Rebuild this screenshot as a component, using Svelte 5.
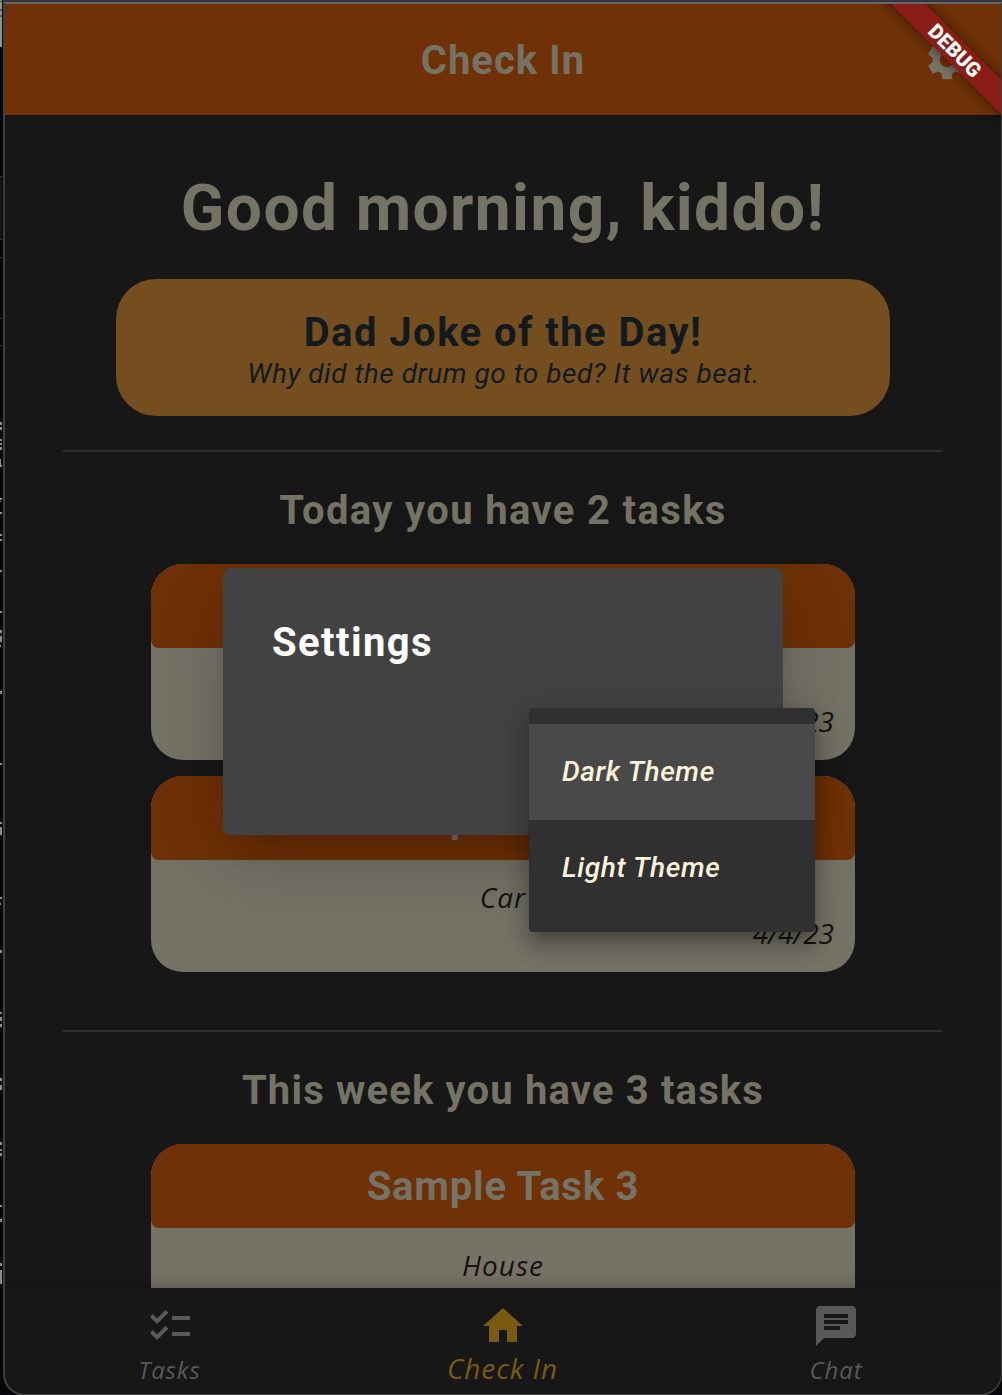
<script>
  const today = [
    { id: 1, title: '', category: '', due: '4/4/23' },
    { id: 2, title: 'Sample Task 2', category: 'Car', due: '4/4/23' }
  ];
  const week = [{ id: 3, title: 'Sample Task 3', category: 'House', due: null }];

  // [y, height, width] of the marks peeking out from the window behind
  const slivers = [
    [422, 3, 2], [427, 3, 2], [439, 2, 2], [443, 2, 2], [447, 3, 2], [459, 7, 1], [465, 2, 2],
    [498, 2, 2], [501, 1, 1], [512, 2, 2], [534, 2, 2], [539, 2, 2], [570, 2, 2], [611, 2, 2],
    [630, 3, 2], [636, 6, 2], [645, 2, 1], [691, 3, 2], [763, 2, 2], [822, 2, 2], [827, 8, 2],
    [897, 2, 2], [903, 2, 1], [950, 3, 2], [1012, 2, 2], [1017, 4, 2], [1024, 3, 2],
    [1078, 3, 2], [1085, 5, 2], [1142, 3, 2], [1149, 2, 2], [1153, 3, 2], [1205, 2, 2],
    [1219, 3, 2], [1263, 3, 2], [1270, 14, 2]
  ];
</script>

{#snippet taskCard(task)}
  <article class="task">
    <h3 class="display">{task.title}</h3>
    <p class="category">{task.category}</p>
    {#if task.due}
      <p class="due">{task.due}</p>
    {/if}
  </article>
{/snippet}

<div class="desktop">
  <svg class="behind" width="3" height="1395" viewBox="0 0 3 1395" aria-hidden="true">
    <rect width="2" height="47" fill="#929292" />
    <rect y="1" width="2" height="1" fill="#444" />
    <rect y="9" width="2" height="2" fill="#555" />
    <rect y="15" width="2" height="2" fill="#555" />
    <rect y="177" width="2" height="62" fill="#15191c" />
    <rect y="176" width="2" height="1" fill="#303438" />
    <rect y="239" width="2" height="1" fill="#303438" />
    <rect y="257" width="2" height="1" fill="#303438" />
    <rect y="318" width="2" height="1" fill="#303438" />
    <rect y="345" width="2" height="1" fill="#303438" />
    {#each slivers as [y, h, w]}
      <rect {y} width={w} height={h} fill="#8b8e91" />
    {/each}
  </svg>

  <div class="window">
    <header class="appbar">
      <h1 class="display">Check In</h1>
      <svg class="gear" viewBox="0 0 24 24" aria-label="Settings">
        <path d="M19.14 12.94c.04-.3.06-.61.06-.94 0-.32-.02-.64-.07-.94l2.03-1.58c.18-.14.23-.41.12-.61l-1.92-3.32c-.12-.22-.37-.29-.59-.22l-2.39.96c-.5-.38-1.03-.7-1.62-.94l-.36-2.54c-.04-.24-.24-.41-.48-.41h-3.84c-.24 0-.43.17-.47.41l-.36 2.54c-.59.24-1.13.57-1.62.94l-2.39-.96c-.22-.08-.47 0-.59.22L2.74 8.87c-.12.21-.08.47.12.61l2.03 1.58c-.05.3-.09.63-.09.94s.02.64.07.94l-2.03 1.58c-.18.14-.23.41-.12.61l1.92 3.32c.12.22.37.29.59.22l2.39-.96c.5.38 1.03.7 1.62.94l.36 2.54c.05.24.24.41.48.41h3.84c.24 0 .44-.17.47-.41l.36-2.54c.59-.24 1.13-.56 1.62-.94l2.39.96c.22.08.47 0 .59-.22l1.92-3.32c.12-.22.07-.47-.12-.61l-2.01-1.58zM12 15.6c-1.98 0-3.6-1.62-3.6-3.6s1.62-3.6 3.6-3.6 3.6 1.62 3.6 3.6-1.62 3.6-3.6 3.6z" />
      </svg>
    </header>

    <main>
      <h2 class="display greeting">Good morning, kiddo!</h2>
      <section class="joke">
        <h3 class="display">Dad Joke of the Day!</h3>
        <p>Why did the drum go to bed? It was beat.</p>
      </section>
      <hr />
      <h2 class="display count today">Today you have 2 tasks</h2>
      <div class="list">
        {#each today as task (task.id)}
          {@render taskCard(task)}
        {/each}
      </div>
      <hr class="second" />
      <h2 class="display count week">This week you have 3 tasks</h2>
      <div class="list">
        {#each week as task (task.id)}
          {@render taskCard(task)}
        {/each}
      </div>
    </main>

    <nav>
      <div class="tab">
        <svg viewBox="0 0 24 24"><path d="M22 7h-9v2h9V7zm0 8h-9v2h9v-2zM5.54 11L2 7.46l1.41-1.41 2.12 2.12 4.24-4.24 1.41 1.41L5.54 11zm0 8L2 15.46l1.41-1.41 2.12 2.12 4.24-4.24 1.41 1.41L5.54 19z" /></svg>
        <span>Tasks</span>
      </div>
      <div class="tab active">
        <svg viewBox="0 0 24 24"><path d="M10 20v-6h4v6h5v-8h3L12 3 2 12h3v8z" /></svg>
        <span>Check In</span>
      </div>
      <div class="tab">
        <svg viewBox="0 0 24 24"><path d="M20 2H4c-1.1 0-1.99.9-1.99 2L2 22l4-4h14c1.1 0 2-.9 2-2V4c0-1.1-.9-2-2-2zM6 9h12v2H6V9zm8 5H6v-2h8v2zm4-6H6V6h12v2z" /></svg>
        <span>Chat</span>
      </div>
    </nav>
  </div>

  <div class="dialog" role="dialog" aria-label="Settings">
    <h2 class="display">Settings</h2>
  </div>
  <div class="menu" role="menu">
    <div class="item selected" role="menuitem">Dark Theme</div>
    <div class="item" role="menuitem">Light Theme</div>
  </div>

  <svg class="banner" width="129" height="130" viewBox="0 0 129 130" aria-hidden="true">
    <polygon class="ribbon" points="-2,-21 32.5,-21 170,116.5 170,151" />
    <text transform="translate(83 46.5) rotate(45)" text-anchor="middle" y="7.3">DEBUG</text>
  </svg>
  <div class="frame"></div>
</div>

<style>
  :global(body) {
    background: #05070a;
  }
  .desktop {
    position: relative;
    width: 1002px;
    height: 1395px;
    overflow: hidden;
    background: #06070b;
    font-family: Roboto, sans-serif;
    padding: 4px 1px 0 5px;
    box-sizing: border-box;
  }
  .behind {
    position: absolute;
    left: 0;
    top: 0;
  }
  .window {
    isolation: isolate;
    display: flex;
    flex-direction: column;
    height: 1391px;
    background: #171717;
    border-radius: 0 0 20px 20px;
    overflow: hidden;
  }
  .frame {
    position: absolute;
    inset: 0 0 -1px 3px;
    border: 2px solid rgba(120, 120, 120, 0.5);
    border-right-width: 1px;
    border-top: 2px solid #666669;
    border-radius: 0 0 22px 22px;
    margin-top: 2px;
    box-shadow: 0 -3px 0 #35363b;
  }
  h1, h2, h3, p, hr {
    margin: 0;
  }
  .display {
    font-family: Roboto, sans-serif;
    font-weight: 700;
    font-size: 40px;
    line-height: 48px;
    color: #757266;
    white-space: nowrap;
  }
  .appbar {
    flex: none;
    display: grid;
    grid-template-columns: 1fr auto 1fr;
    align-items: center;
    height: 111px;
    background: #6f3105;
    box-shadow: 0 2px 6px rgba(0, 0, 0, 0.2);
    z-index: 1;
  }
  .appbar h1 {
    grid-column: 2;
    padding-top: 2px;
    letter-spacing: 1px;
  }
  .gear {
    justify-self: end;
    width: 48px;
    height: 48px;
    margin-right: 30px;
    fill: #757266;
  }
  main {
    flex: 1;
    min-height: 0;
    overflow: hidden;
    padding: 56px 58px 0;
  }
  .greeting {
    font-size: 64px;
    line-height: 76px;
    text-align: center;
    letter-spacing: 1.4px;
  }
  .joke {
    height: 137px;
    margin: 32px 53px 34px;
    padding-top: 30px;
    box-sizing: border-box;
    border-radius: 40px;
    background: #754e1f;
    text-align: center;
  }
  .joke .display {
    color: #131a1e;
    letter-spacing: 1.45px;
  }
  .joke p {
    font-size: 28px;
    line-height: 34px;
    font-style: italic;
    letter-spacing: 0.53px;
    color: #131a1e;
    padding-left: 1px;
  }
  hr {
    border: 0;
    height: 2px;
    background: #2f2f2f;
  }
  .count {
    text-align: center;
  }
  .today {
    margin: 35px 0 29px;
    letter-spacing: 1.35px;
  }
  .week {
    margin: 35px 0 29px;
    letter-spacing: 1.15px;
  }
  .list {
    display: grid;
    gap: 16px;
    padding: 0 88px;
  }
  .second {
    margin-top: 58px;
  }
  .task {
    height: 196px;
    border-radius: 32px;
    overflow: hidden;
    background: #757266;
    color: #131313;
    font: italic 28px/36px 'Open Sans', sans-serif;
  }
  .task h3 {
    height: 84px;
    line-height: 86px;
    text-align: center;
    background: #6f3105;
    border-radius: 0 0 8px 8px;
    font-style: normal;
    letter-spacing: 0.8px;
  }
  .category {
    height: 36px;
    text-align: center;
    margin-top: 19px;
    letter-spacing: 1px;
  }
  .due {
    text-align: right;
    padding-right: 21px;
  }
  nav {
    flex: none;
    height: 107px;
    display: grid;
    grid-template-columns: 329px 1fr 330px;
    box-shadow: 0 -2px 14px rgba(0, 0, 0, 0.25);
    background: #171717;
    z-index: 1;
  }
  .tab {
    display: flex;
    flex-direction: column;
    align-items: center;
    padding-top: 14px;
    font: italic 24px/34px 'Open Sans', sans-serif;
    letter-spacing: 0.9px;
    color: #595959;
  }
  .tab svg {
    width: 48px;
    height: 48px;
    fill: currentColor;
  }
  .tab span {
    margin-top: 3px;
  }
  .active {
    color: #7a5a10;
    font-size: 28px;
  }
  .active span {
    margin-top: 1px;
  }
  .dialog {
    position: absolute;
    left: 223px;
    top: 568px;
    width: 560px;
    height: 267px;
    box-sizing: border-box;
    padding: 51px 49px;
    border-radius: 8px;
    background: #424242;
    box-shadow: 0 22px 30px -14px rgba(0, 0, 0, 0.15), 0 24px 80px 6px rgba(0, 0, 0, 0.17);
  }
  .dialog h2 {
    color: #fff;
    letter-spacing: 1.4px;
  }
  .menu {
    position: absolute;
    left: 529px;
    top: 708px;
    width: 286px;
    height: 224px;
    box-sizing: border-box;
    padding-top: 16px;
    border-radius: 4px;
    background: #303030;
    box-shadow: 0 10px 10px -6px rgba(0, 0, 0, 0.2), 0 16px 20px 2px rgba(0, 0, 0, 0.14), 0 6px 28px 4px rgba(0, 0, 0, 0.16);
  }
  .item {
    height: 96px;
    padding-left: 33px;
    font: italic 500 28px/96px Roboto, sans-serif;
    letter-spacing: 0.6px;
    color: #fff3dc;
  }
  .selected {
    background: #494949;
  }
  .banner {
    position: absolute;
    left: 872px;
    top: 4px;
  }
  .ribbon {
    fill: rgba(142, 28, 22, 0.96);
    filter: drop-shadow(0 0 6px rgba(0, 0, 0, 0.6));
  }
  .banner text {
    fill: #fff;
    font: 900 20.4px Roboto, sans-serif;
  }
</style>
